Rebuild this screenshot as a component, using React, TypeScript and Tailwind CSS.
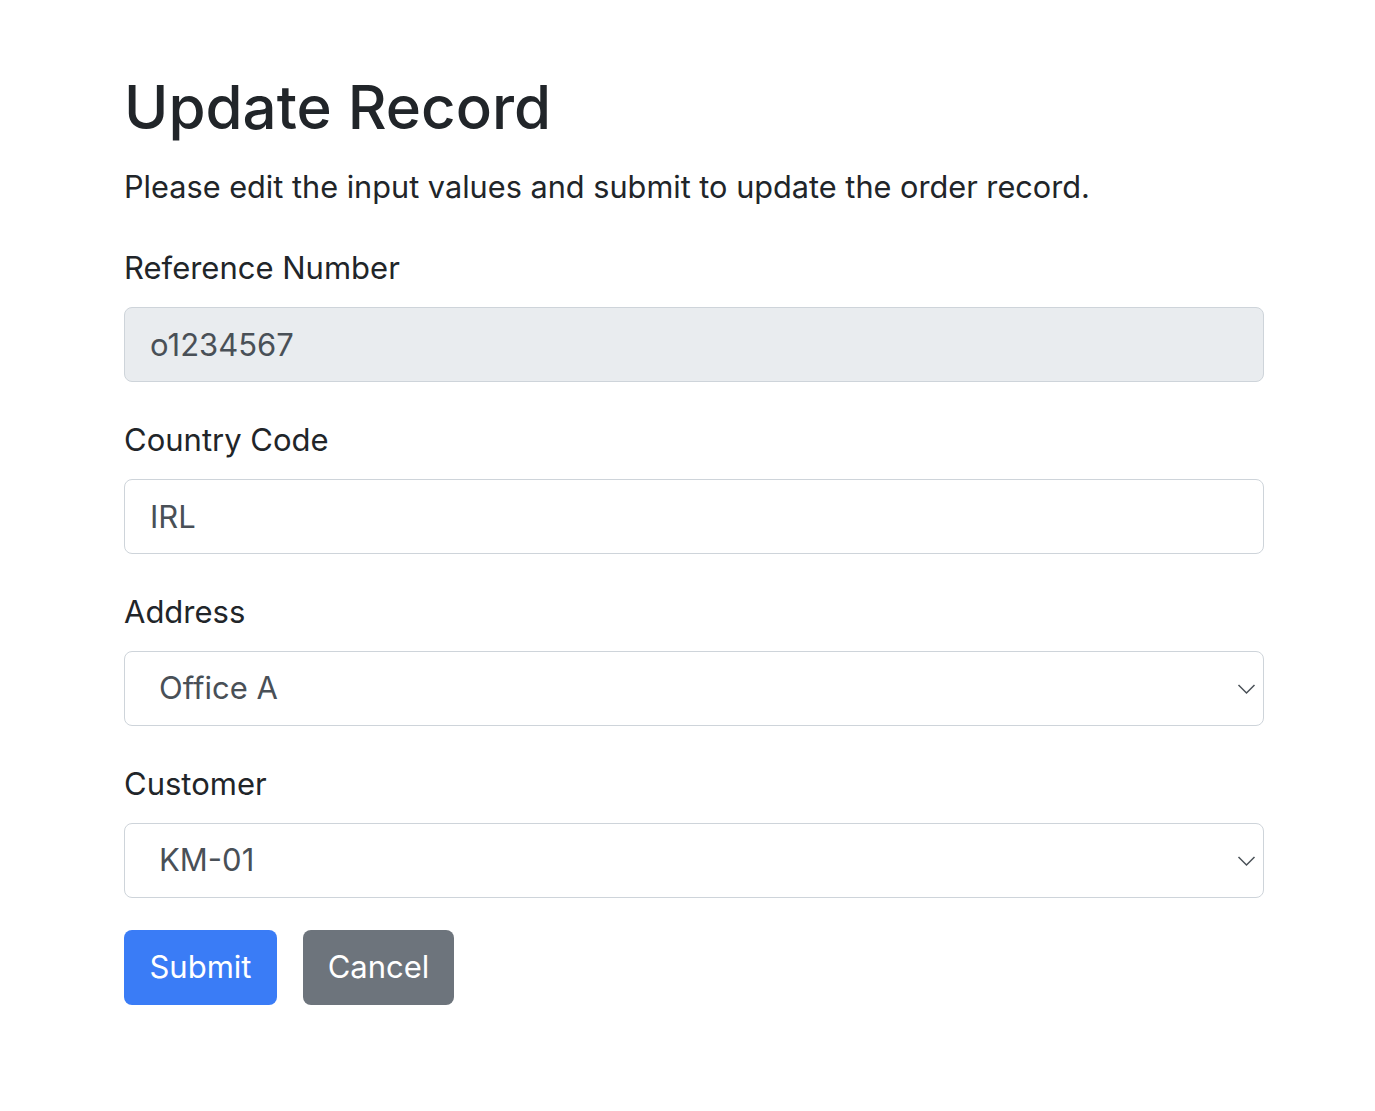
import { useState } from "react";

export default function App() {
  const [country, setCountry] = useState("IRL");
  const [address, setAddress] = useState("Office A");
  const [customer, setCustomer] = useState("KM-01");

  const inputClass =
    "w-full h-[75px] px-[25px] border border-[#ced4da] rounded-[8px] text-[31px] text-[#495057] outline-none";

  const Chevron = () => (
    <svg
      className="absolute right-[8px] top-1/2 -translate-y-1/2 pointer-events-none"
      width="19"
      height="11"
      viewBox="0 0 19 11"
      fill="none"
      stroke="#495057"
      strokeWidth="1.5"
    >
      <path d="M1.5 1.5l8 8 8-8" />
    </svg>
  );

  return (
    <div
      className="min-h-screen bg-white text-[#212529]"
      style={{ fontFamily: "Inter, 'Noto Sans', sans-serif" }}
    >
      <div className="ml-[124px] w-[1140px] pt-[71px]">
        <h1 className="text-[60px] leading-[72px] font-medium">Update Record</h1>
        <p className="mt-[21px] text-[30.7px] leading-[46px]">
          Please edit the input values and submit to update the order record.
        </p>

        <form onSubmit={(e) => e.preventDefault()}>
          <div className="mt-[35px]">
            <label className="block text-[31px] leading-[46px] mb-[16px]">
              Reference Number
            </label>
            <input
              type="text"
              value="o1234567"
              disabled
              className={`${inputClass} bg-[#e9ecef]`}
            />
          </div>

          <div className="mt-[35px]">
            <label className="block text-[31px] leading-[46px] mb-[16px]">
              Country Code
            </label>
            <input
              type="text"
              value={country}
              onChange={(e) => setCountry(e.target.value)}
              className={`${inputClass} bg-white`}
            />
          </div>

          <div className="mt-[35px]">
            <label className="block text-[31px] leading-[46px] mb-[16px]">
              Address
            </label>
            <div className="relative">
              <select
                value={address}
                onChange={(e) => setAddress(e.target.value)}
                className={`${inputClass} appearance-none bg-white pl-[34px]`}
              >
                <option>Office A</option>
                <option>Office B</option>
              </select>
              <Chevron />
            </div>
          </div>

          <div className="mt-[35px]">
            <label className="block text-[31px] leading-[46px] mb-[16px]">
              Customer
            </label>
            <div className="relative">
              <select
                value={customer}
                onChange={(e) => setCustomer(e.target.value)}
                className={`${inputClass} appearance-none bg-white pl-[34px]`}
              >
                <option>KM-01</option>
                <option>KM-02</option>
              </select>
              <Chevron />
            </div>
          </div>

          <div className="mt-[32px] flex gap-[26px]">
            <button
              type="submit"
              className="h-[75px] w-[153px] rounded-[8px] bg-[#3a7cf6] text-white text-[31px]"
            >
              Submit
            </button>
            <button
              type="button"
              className="h-[75px] w-[151px] rounded-[8px] bg-[#6d747c] text-white text-[31px]"
            >
              Cancel
            </button>
          </div>
        </form>
      </div>
    </div>
  );
}
